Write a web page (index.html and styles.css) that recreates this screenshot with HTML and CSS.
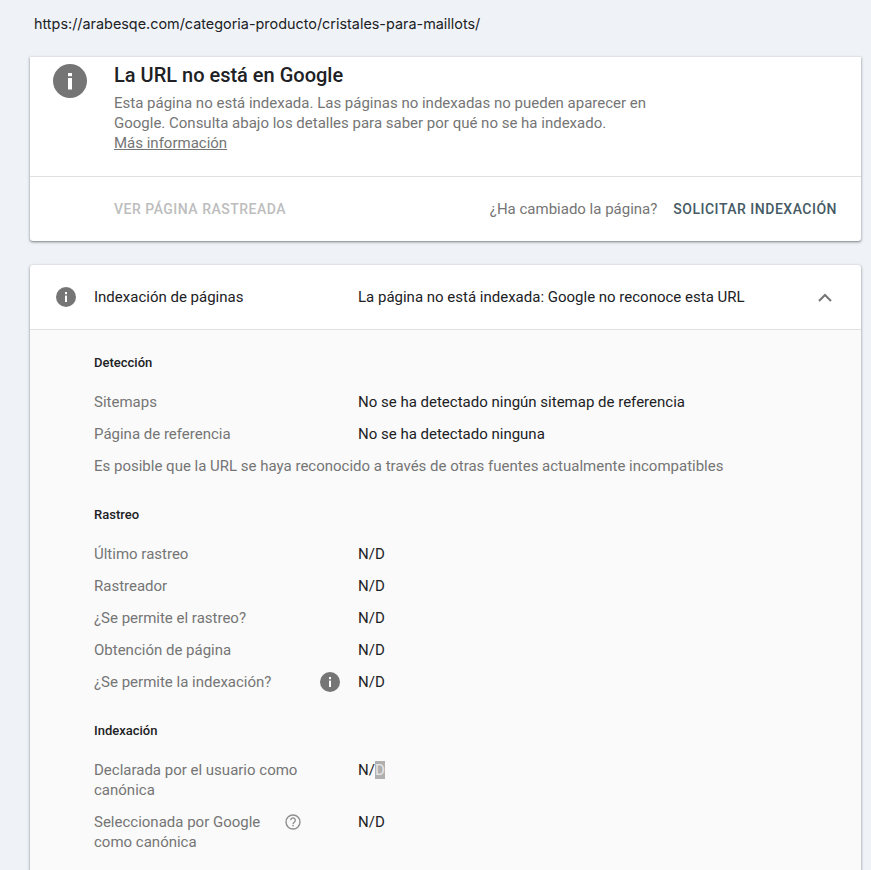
FILE: index.html
```html
<!DOCTYPE html>
<html lang="es">
<head>
<meta charset="utf-8">
<title>Inspección de URLs</title>
<link rel="stylesheet" href="styles.css">
</head>
<body>
<header class="urlbar">https://arabesqe.com/categoria-producto/cristales-para-maillots/</header>
<main class="content">
  <section class="card verdict">
    <div class="verdict-top">
      <svg class="icon-lg" viewBox="0 0 34 34"><circle cx="17" cy="17" r="17" fill="#757575"/><rect x="15" y="9" width="4" height="3.2" fill="#fff"/><rect x="15" y="14" width="4" height="11.5" fill="#fff"/></svg>
      <div class="verdict-text">
        <h1>La URL no está en Google</h1>
        <p>Esta página no está indexada. Las páginas no indexadas no pueden aparecer en Google. Consulta abajo los detalles para saber por qué no se ha indexado.</p>
        <a class="more">Más información</a>
      </div>
    </div>
    <div class="actions">
      <span class="btn-disabled">VER PÁGINA RASTREADA</span>
      <span class="changed">¿Ha cambiado la página?</span>
      <span class="btn-primary">SOLICITAR INDEXACIÓN</span>
    </div>
  </section>
  <section class="card detail">
    <div class="detail-head">
      <span class="col-label head-label">
        <svg class="icon-md" viewBox="0 0 20 20"><circle cx="10" cy="10" r="10" fill="#757575"/><rect x="9" y="5" width="2" height="2.2" fill="#fff"/><rect x="9" y="8.6" width="2" height="6.4" fill="#fff"/></svg>
        <span>Indexación de páginas</span>
      </span>
      <span class="head-value">La página no está indexada: Google no reconoce esta URL</span>
      <svg class="chevron" viewBox="0 0 14 9"><path d="M1 8 L7 2 L13 8" fill="none" stroke="#757575" stroke-width="2"/></svg>
    </div>
    <div class="detail-body">
      <h2>Detección</h2>
      <div class="row"><span class="key">Sitemaps</span><span class="val">No se ha detectado ningún sitemap de referencia</span></div>
      <div class="row"><span class="key">Página de referencia</span><span class="val">No se ha detectado ninguna</span></div>
      <div class="row"><span class="key wide">Es posible que la URL se haya reconocido a través de otras fuentes actualmente incompatibles</span></div>
      <h2 class="later">Rastreo</h2>
      <div class="row"><span class="key">Último rastreo</span><span class="val">N/D</span></div>
      <div class="row"><span class="key">Rastreador</span><span class="val">N/D</span></div>
      <div class="row"><span class="key">¿Se permite el rastreo?</span><span class="val">N/D</span></div>
      <div class="row"><span class="key">Obtención de página</span><span class="val">N/D</span></div>
      <div class="row"><span class="key key-icon">¿Se permite la indexación?<svg class="icon-md" viewBox="0 0 20 20"><circle cx="10" cy="10" r="10" fill="#757575"/><rect x="9" y="5" width="2" height="2.2" fill="#fff"/><rect x="9" y="8.6" width="2" height="6.4" fill="#fff"/></svg></span><span class="val">N/D</span></div>
      <h2 class="later">Indexación</h2>
      <div class="row two"><span class="key">Declarada por el usuario como canónica</span><span class="val">N/<span class="selected">D</span></span></div>
      <div class="row two"><span class="key key-help"><span class="key-text">Seleccionada por Google como canónica</span><svg class="icon-help" viewBox="0 0 16 16"><circle cx="8" cy="8" r="7" fill="none" stroke="#8f8f8f" stroke-width="1.4"/><path d="M5.7 6.3 A2.3 2.3 0 1 1 9.4 8.1 C8.4 8.8 8 9.2 8 10.2" fill="none" stroke="#8f8f8f" stroke-width="1.3"/><rect x="7.3" y="11" width="1.4" height="1.4" fill="#8f8f8f"/></svg></span><span class="val">N/D</span></div>
    </div>
  </section>
</main>
</body>
</html>
```
FILE: styles.css
```css
* { box-sizing: border-box; }
html, body { margin: 0; height: 870px; overflow: hidden; }
body {
  background: #eff3f8;
  font-family: Roboto, "Liberation Sans", sans-serif;
  font-size: 15px;
  color: #202124;
}
.urlbar {
  height: 57px;
  padding: 15px 0 0 34px;
  font-family: Inter, "Open Sans", sans-serif;
  font-size: 14.4px;
  line-height: 18px;
  color: #202124;
}
.content { padding: 0 10px 0 30px; }
.card {
  background: #fff;
  border-radius: 0 0 3px 3px;
  box-shadow: 0 1px 2px rgba(60, 64, 67, .5), 0 1px 3px 1px rgba(60, 64, 67, .15);
}
.verdict { height: 184px; margin-bottom: 24px; }
.verdict-top {
  display: flex;
  height: 120px;
  border-bottom: 1px solid #e0e0e0;
  padding: 6px 0 0 23px;
}
.icon-lg { width: 34px; height: 34px; flex: none; margin: 1px 27px 0 0; }
.verdict-text { width: 560px; }
h1 {
  margin: 0 0 6px;
  font-size: 20px;
  font-weight: 500;
  line-height: 24px;
  color: #202124;
}
.verdict-text p {
  margin: 0;
  font-size: 15px;
  line-height: 20px;
  color: #757575;
}
.more {
  display: block;
  font-size: 15px;
  line-height: 20px;
  color: #757575;
  text-decoration: underline;
}
.actions {
  display: flex;
  align-items: center;
  height: 64px;
  padding: 0 24px 0 84px;
  font-size: 14px;
  letter-spacing: .5px;
  font-weight: 500;
}
.btn-disabled { color: #bdbdbd; }
.changed {
  margin-left: auto;
  margin-right: 16px;
  font-size: 15px;
  font-weight: 400;
  letter-spacing: 0;
  color: #757575;
}
.btn-primary { color: #455a64; }
.detail { border-radius: 3px 3px 0 0; height: 640px; }
.detail-head {
  display: flex;
  align-items: center;
  height: 65px;
  padding: 0 29px 0 26px;
  border-bottom: 1px solid #e0e0e0;
}
.col-label { width: 302px; flex: none; }
.head-label { display: flex; align-items: center; gap: 18px; }
.head-value { flex: 1; }
.icon-md { width: 20px; height: 20px; flex: none; }
.chevron { width: 14px; height: 9px; flex: none; }
.detail-body {
  background: #fafafa;
  padding: 24px 0 0 64px;
  height: 575px;
}
h2 {
  margin: 0 0 14px;
  font-size: 13px;
  font-weight: 500;
  line-height: 18px;
  color: #202124;
}
h2.later { margin-top: 24px; }
.row {
  display: flex;
  min-height: 32px;
  line-height: 20px;
  padding: 6px 0;
}
.row.two { min-height: 52px; }
.key { width: 264px; flex: none; color: #757575; }
.key.wide { width: auto; }
.key-icon { display: flex; justify-content: space-between; width: 246px; margin-right: 18px; }
.key-help { display: flex; align-items: flex-start; }
.key-text { width: 191px; }
.icon-help { width: 16px; height: 16px; margin-top: 2px; flex: none; }
.val { color: #202124; }
.selected { background: #b0b0b0; color: #e8e8e8; }
```
